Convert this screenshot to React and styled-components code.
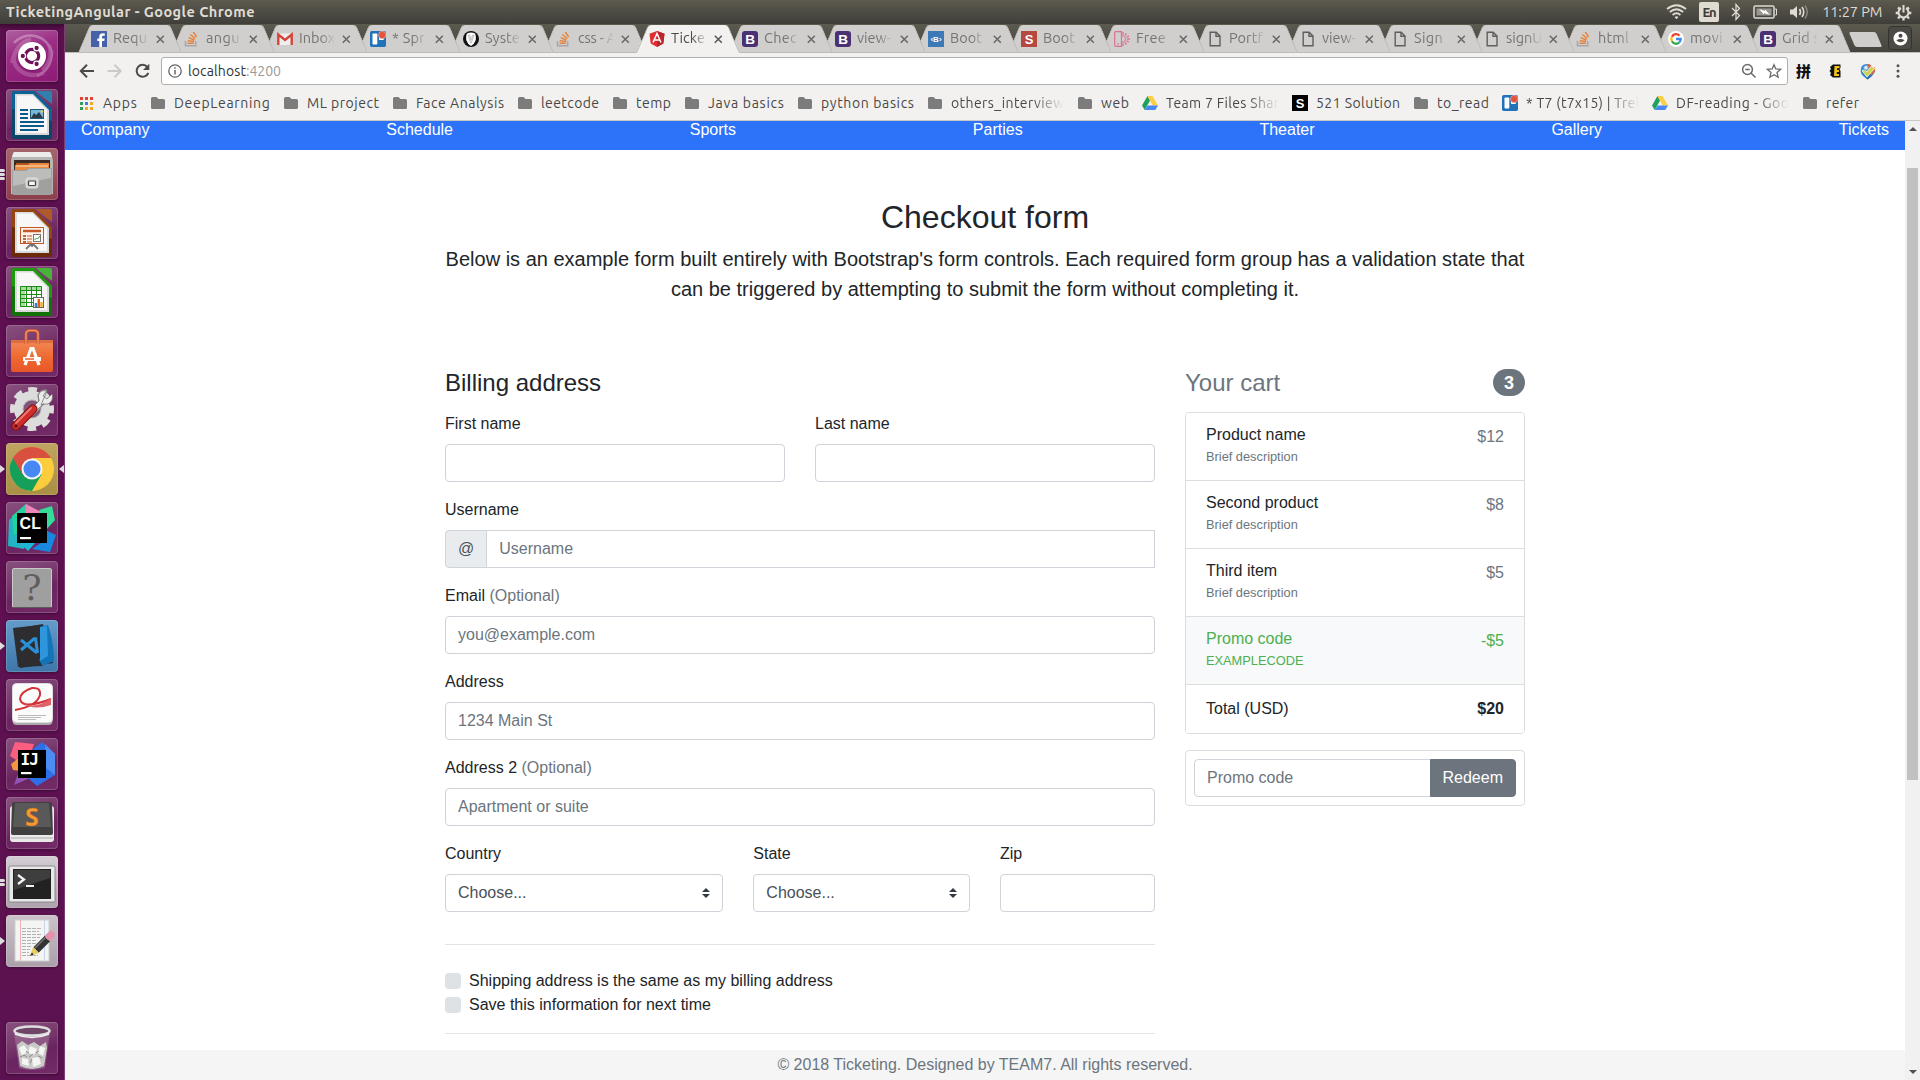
import React, { useLayoutEffect, useRef, useState } from "react";
import styled, { createGlobalStyle, css } from "styled-components";

const uiFont = `Ubuntu, "Open Sans", "Noto Sans", sans-serif`;

const Global = createGlobalStyle`
  *, *::before, *::after { box-sizing: border-box; }
  body { margin: 0; overflow: hidden; font-family: "Liberation Sans", Arial, sans-serif; font-size: 16px; line-height: 1.5; color: #212529; background: #fff; }
  svg { display: block; flex: none; }
`;

const Desktop = styled.div`
  width: 1920px;
  height: 1080px;
  display: flex;
  flex-direction: column;
  overflow: hidden;
`;

/* ---------- text fitted to a known width ---------- */
const FitSpan = styled.span`
  display: inline-block;
  white-space: pre;
`;

function Fit({ width, children }) {
  const ref = useRef(null);
  const [spacing, setSpacing] = useState(0);
  useLayoutEffect(() => {
    const natural = ref.current.getBoundingClientRect().width;
    setSpacing((width - natural) / children.length);
  }, []);
  return (
    <FitSpan ref={ref} style={{ letterSpacing: `${spacing}px` }}>
      {children}
    </FitSpan>
  );
}

/* ---------- system bar ---------- */
const TopBar = styled.header`
  height: 24px;
  flex: none;
  display: flex;
  align-items: center;
  justify-content: space-between;
  padding: 0 8px 0 6px;
  background: linear-gradient(#5d5a4f 0, #57554c 15%, #3f3e39 100%);
  color: #dfdbd2;
  font: 14.5px/24px ${uiFont};
`;
const WindowTitle = styled.div`
  font-weight: 700;
  font-size: 14.5px;
`;
const Indicators = styled.div`
  display: flex;
  align-items: center;
  gap: 11.8px;
`;
const Clock = styled.span`
  margin-right: 1px;
`;
const Keyboard = styled.span`
  width: 20px;
  height: 20px;
  border-radius: 2px;
  background: #dfdbd2;
  color: #3c3b37;
  font-size: 13px;
  font-weight: 600;
  line-height: 21px;
  text-align: center;
`;

/* ---------- launcher ---------- */
const Body = styled.div`
  flex: 1;
  display: flex;
  min-height: 0;
`;
const Launcher = styled.nav`
  width: 65px;
  flex: none;
  display: flex;
  flex-direction: column;
  gap: 7px;
  padding: 6px 6px 6px;
  background: linear-gradient(#3c0a34 0, #5c0f4e 6px, #5f1051 50%, #5c1250 100%);
  border-right: 1px solid #7c3f73;
`;
const Tile = styled.div`
  position: relative;
  width: 52px;
  height: 52px;
  flex: none;
  border-radius: 4px;
  background: ${(p) => p.$bg || "linear-gradient(160deg, #88517f 0, #7a3a6e 35%, #6a2460 60%, #742c68 100%)"};
  box-shadow: inset 0 0 0 1px rgba(255, 255, 255, 0.17), 0 1px 3px rgba(0, 0, 0, 0.35);
  margin-top: ${(p) => (p.$last ? "auto" : "0")};
`;
const Pip = styled.i`
  position: absolute;
  top: 22px;
  ${(p) => (p.$right ? "right: -6px; border-right: 5px solid #ddd;" : "left: -6px; border-left: 5px solid #ddd;")}
  border-top: 4px solid transparent;
  border-bottom: 4px solid transparent;
`;
const Pips = styled.div`
  position: absolute;
  left: -6px;
  top: 0;
  height: 52px;
  display: flex;
  flex-direction: column;
  justify-content: center;
  gap: 1px;
  i {
    width: 5px;
    height: 3px;
    background: #ddd;
    border-radius: 0 2px 2px 0;
  }
`;

function Doc({ dark, mid, light, children }) {
  return (
    <svg width="52" height="52" viewBox="0 0 52 52">
      <path d="M8 2H28L46 20V48Q46 50 44 50H8Q6 50 6 48V4Q6 2 8 2Z" fill={dark} />
      <path d="M8 2H28L46 20V32L6 20V4Q6 2 8 2Z" fill={mid} opacity=".75" />
      <path d="M9 5H27L43 21V46H9Z" fill="#d9d9d9" />
      <path d="M11 6.500H26.500L41 21V44H11Z" fill="#f7f7f7" />
      <path d="M30 2H44Q46 2 46 4V15Q42 12 38 9Z" fill={light} opacity=".9" />
      {children}
    </svg>
  );
}

const UbuntuIcon = () => (
  <svg width="52" height="52" viewBox="0 0 52 52">
    <g fill="none" stroke="#fff" opacity=".3" strokeWidth="2.500">
      <path d="M8 13A22 22 0 0 1 46 23Q45 40 31 46" />
      <path d="M6 33Q9 14 25 9M43 15Q48 31 36 40M11 20Q3 33 16 42Q26 48 38 43" strokeWidth="4" opacity=".6" />
    </g>
    <circle cx="26" cy="27" r="14.500" fill="#4b0a3e" opacity=".35" />
    <circle cx="26" cy="26" r="14" fill="#fff" />
    <circle cx="26" cy="26" r="6.700" fill="none" stroke="#6c1459" strokeWidth="3.200" />
    <g stroke="#fff" strokeWidth="1.300" fill="#6c1459">
      <circle cx="16.800" cy="26" r="2.800" />
      <circle cx="30.600" cy="18" r="2.800" />
      <circle cx="30.600" cy="34" r="2.800" />
    </g>
  </svg>
);
const WriterIcon = () => (
  <Doc dark="#0b466b" mid="#0f6ea3" light="#2a86b5">
    <path d="M14 21h8M14 25h8M14 29h8M14 33h24M14 37h24M14 41h18" stroke="#0a5a8c" strokeWidth="2" />
    <rect x="24.500" y="20.500" width="13" height="9" fill="#76b7dc" stroke="#1c5a7e" />
    <path d="M25 29l3-5 2 2 3-3 4 6z" fill="#2b3a42" />
    <circle cx="36" cy="22.500" r="1.300" fill="#f5c94a" />
  </Doc>
);
const FilesIcon = () => (
  <svg width="52" height="52" viewBox="0 0 52 52">
    <path d="M7 5Q7 4 9 4H43Q45 4 45 5L47 12V46H5V12Z" fill="#b7b7b5" />
    <path d="M8 4H44L46 9H6Z" fill="#ececea" />
    <rect x="8" y="12" width="36" height="10" fill="#3b2b26" />
    <path d="M10 15H42V22H10Z" fill="#b5541c" />
    <path d="M9 17H22L24 15H43V22H9Z" fill="#e8893e" />
    <path d="M10 18H42" stroke="#ffe2bd" />
    <path d="M6 22H20L23 20H46V45Q46 47 44 47H8Q6 47 6 45Z" fill="#a0a09e" />
    <path d="M7 23H20L23 21H45V30L7 38Z" fill="#bcbcba" />
    <rect x="20" y="30" width="12" height="10" rx="2" fill="#cfcfcd" stroke="#e2e2e0" />
    <rect x="22.500" y="33" width="7" height="4.500" rx=".8" fill="#f7f7f7" stroke="#444" strokeWidth="1.200" />
  </svg>
);
const ImpressIcon = () => (
  <Doc dark="#6b2a08" mid="#a34d17" light="#b55d24">
    <rect x="14.500" y="20.500" width="23" height="16" fill="#fff3ec" stroke="#c4572a" />
    <path d="M17 24h18" stroke="#c4572a" strokeWidth="2.500" />
    <path d="M17 29h3M17 32h3M17 35h3" stroke="#9a3c12" strokeWidth="1.500" />
    <path d="M21 29h5M21 32h5M21 35h5" stroke="#d88a68" strokeWidth="1.500" />
    <rect x="27.500" y="27.500" width="7" height="7" fill="#fff" stroke="#777" />
    <path d="M28.500 33l2-2 1 1 2.500-3" stroke="#2b9a38" fill="none" />
    <path d="M25 37l-5 5M27 37l5 5M26 37v3" stroke="#777" strokeWidth="1.800" />
  </Doc>
);
const CalcIcon = () => (
  <Doc dark="#12720a" mid="#23a812" light="#42bf34">
    <rect x="14" y="20" width="22" height="21" fill="#fff" />
    <path d="M14 20h22v5H14zM14 20h5v21H14z" fill="#a9dca0" />
    <path d="M14.500 20.500h21v20h-21zM14 24.500h22M14 28.500h22M14 32.500h22M14 36.500h22M20.500 20v21M25.500 20v21M30.500 20v21" stroke="#1e8a18" fill="none" />
    <rect x="27.500" y="31.500" width="10" height="10" fill="#fff" stroke="#666" />
    <path d="M30 41v-4" stroke="#2d7fd6" strokeWidth="2.500" />
    <path d="M32.800 41v-8" stroke="#e55a1c" strokeWidth="2.500" />
    <path d="M35.500 41v-5" stroke="#efb52d" strokeWidth="2.500" />
  </Doc>
);
const SoftwareIcon = () => (
  <svg width="52" height="52" viewBox="0 0 52 52">
    <defs>
      <linearGradient id="bag" x2="0" y2="1">
        <stop stopColor="#f2895a" />
        <stop offset=".5" stopColor="#ee6c31" />
        <stop offset="1" stopColor="#e8572a" />
      </linearGradient>
    </defs>
    <path d="M5 15H47V45Q47 47 45 47H7Q5 47 5 45Z" fill="url(#bag)" />
    <path d="M5 15H47V18H5Z" fill="#c9542a" opacity=".5" />
    <path d="M20 19V9Q20 5.500 24 5.500H28Q32 5.500 32 9V19" fill="none" stroke="#d0562c" strokeWidth="3" />
    <path d="M20 19V9Q20 5.500 24 5.500H28Q32 5.500 32 9V19" fill="none" stroke="#f39b72" strokeWidth="1.200" />
    <path d="M19 40L25 23.500H27L33 40" fill="none" stroke="#fff" strokeWidth="3.200" />
    <path d="M17 34H35" stroke="#fff" strokeWidth="4" />
    <path d="M19 34H28" stroke="#ee6c31" strokeWidth="1.600" />
  </svg>
);
const SettingsIcon = () => (
  <svg width="52" height="52" viewBox="0 0 52 52">
    <circle cx="26" cy="25" r="13.500" fill="none" stroke="#dcdcdc" strokeWidth="9" />
    <circle cx="26" cy="25" r="19" fill="none" stroke="#dcdcdc" strokeWidth="6" strokeDasharray="8.500 6.420" strokeDashoffset="4.250" />
    <circle cx="26" cy="25" r="9" fill="#83557b" stroke="#b5b5b5" />
    <path d="M35 21L41 7Q34 5 32 12L33 17L22 28L26 31L37 20L42 20Q48 17 46 10L41 15L37 12L41 6Q34 5 32 11L33 17L22 28L27 32L38 20Z" fill="#ececec" stroke="#777" strokeWidth=".8" />
    <path d="M10 42L27 25" stroke="#791010" strokeWidth="9" strokeLinecap="round" />
    <path d="M10 42L27 25" stroke="#cf2d2a" strokeWidth="7" strokeLinecap="round" />
    <path d="M10 39L25 24" stroke="#ef7975" strokeWidth="1.800" strokeLinecap="round" />
    <circle cx="10" cy="42" r="1.600" fill="#5c1010" />
  </svg>
);
const ChromeIcon = () => (
  <svg width="52" height="52" viewBox="0 0 52 52">
    <circle cx="26" cy="26" r="22" fill="#fbcd3c" />
    <path d="M26 26L6.900 15A22 22 0 0 0 26 48L35.500 31.500Z" fill="#149f5b" />
    <path d="M26 15H45A22 22 0 0 0 6.900 15L16.500 31.500Z" fill="#d95040" />
    <circle cx="26" cy="26" r="10.500" fill="#f4f4f4" />
    <circle cx="26" cy="26" r="8.500" fill="#4688f4" />
  </svg>
);
const ClionIcon = () => (
  <svg width="52" height="52" viewBox="0 0 52 52">
    <path d="M3 18L20 2L30 12L18 47L2 44Z" fill="#22b4c2" />
    <path d="M6 14L20 2L24 14L8 34Z" fill="#24d2a0" />
    <path d="M20 2L35 10L30 16L19 14Z" fill="#ee86bd" />
    <path d="M33 8L46 4L49 18L40 28Z" fill="#35dc98" />
    <path d="M37 27L50 33L44 50L26 47L36 40Z" fill="#1788e0" />
    <path d="M12 39L32 38L22 49Z" fill="#1eb7d8" />
    <rect x="11" y="11" width="30" height="30" fill="#000" />
    <text x="13.500" y="26.500" fontSize="16" letterSpacing="0.300" fontFamily='"Liberation Sans", Arial, sans-serif' fontWeight="700" fill="#fff">CL</text>
    <rect x="14" y="35" width="11" height="2.200" fill="#fff" />
  </svg>
);
const UnknownIcon = () => (
  <svg width="52" height="52" viewBox="0 0 52 52">
    <rect x="6.500" y="7.500" width="39" height="39" rx="1.500" fill="#a09f9f" stroke="#c9c9c9" />
    <path d="M7 46.500H46" stroke="#5b5b5b" />
    <text x="26" y="38.500" fontSize="36" textAnchor="middle" fontFamily='"DejaVu Serif", serif' fill="#5f5e5e">?</text>
  </svg>
);
const CodeIcon = () => (
  <svg width="52" height="52" viewBox="0 0 52 52">
    <path d="M9 9L37 4L47 43L14 48Z" fill="#1d1d1f" opacity=".85" />
    <path d="M7 8L34 5L37 46L12 47Z" fill="#2d2d2f" />
    <path d="M34 7L42 5Q48 23 48 41L36 46L33 39L40 37Z" fill="#1474b8" />
    <path d="M34 7L41 6L42 36L34 41Z" fill="#2e96dc" />
    <path d="M15 20L31 33M15 30L29 18M29.500 17.500L31.500 33" stroke="#2b90d8" strokeWidth="3" fill="none" />
  </svg>
);
const PdfIcon = () => (
  <svg width="52" height="52" viewBox="0 0 52 52">
    <rect x="6.500" y="5" width="40" height="41" rx="4" fill="#aaa" />
    <rect x="6.500" y="4.500" width="40" height="39" rx="4" fill="#fbfbfb" stroke="#ddd" />
    <path d="M9 31Q31 27 34 16Q35 8 26 9Q14 13 14 20Q16 31 45 20" fill="none" stroke="#d43239" strokeWidth="2" />
    <path d="M17 24Q29 31 45 19V26Q27 32 17 24Z" fill="#dd626a" />
    <path d="M12 36.500h28M12 38.500h23M12 40.500h18" stroke="#bbb" />
  </svg>
);
const IdeaIcon = () => (
  <svg width="52" height="52" viewBox="0 0 52 52">
    <path d="M9 4L28 6L24 18L10 22L4 18Z" fill="#fb5e7f" />
    <path d="M5 26L14 19L15 33L7 32Z" fill="#f5953c" />
    <path d="M8 47L14 30L24 40Z" fill="#8f55b5" />
    <path d="M26 12L36 4L49 16V37L31 48L22 40Z" fill="#2d6fe8" />
    <path d="M39 6L49 16V37L40 30Z" fill="#4c8bf4" />
    <rect x="12" y="12" width="28" height="28" fill="#000" />
    <text x="14.500" y="27" fontSize="16" fontFamily='"DejaVu Sans Mono", monospace' fontWeight="700" fill="#fff" letterSpacing="-1">IJ</text>
    <rect x="15" y="34" width="10.500" height="2.200" fill="#fff" />
  </svg>
);
const SublimeIcon = () => (
  <svg width="52" height="52" viewBox="0 0 52 52">
    <rect x="4" y="9" width="44" height="36" rx="3" fill="#e9e9e9" />
    <path d="M5 41H47" stroke="#aaa" />
    <path d="M8 5H44Q46 5 46 7L47 36Q47 38 45 38H7Q5 38 5 36L6 7Q6 5 8 5Z" fill="#404040" />
    <path d="M9 6H43L45 30H7Z" fill="#595959" />
    <text x="26" y="29" fontSize="25" textAnchor="middle" fontFamily='"Open Sans", sans-serif' fontWeight="700" fill="#f79a31" stroke="#b9611a" strokeWidth=".4">S</text>
  </svg>
);
const TerminalIcon = () => (
  <svg width="52" height="52" viewBox="0 0 52 52">
    <rect x="3" y="10" width="46" height="36" rx="1.500" fill="#e8e8e8" stroke="#777" strokeWidth=".8" />
    <rect x="7" y="13" width="38" height="30" fill="#222" />
    <path d="M8 14H44V22L8 34Z" fill="#4a4a4a" opacity=".7" />
    <path d="M12 19L18 23.500L12 28" fill="none" stroke="#f2f2f2" strokeWidth="2.300" />
    <path d="M20 30H28" stroke="#f2f2f2" strokeWidth="2" />
  </svg>
);
const EditorIcon = () => (
  <svg width="52" height="52" viewBox="0 0 52 52">
    <rect x="9" y="5" width="34" height="41" fill="#f4f4f2" stroke="#cfcfcf" />
    <path d="M14.500 5V46" stroke="#f1b1b8" />
    <path d="M38.500 5V46" stroke="#c3d6ee" />
    <path d="M16 13.500h19M16 16.500h17M16 19.500h20M16 22.500h18M16 25.500h15M16 28.500h17M16 31.500h10M16 34.500h8M16 37.500h7M16 40.500h16" stroke="#b3b3b3" strokeDasharray="4 1" />
    <path d="M30 35L43 22" stroke="#333" strokeWidth="7.500" />
    <path d="M29 33L41 21" stroke="#777" strokeWidth="1.500" />
    <path d="M41.500 23.500L45 20" stroke="#dadada" strokeWidth="7.500" />
    <path d="M43.500 21.500L45 20" stroke="#e492ab" strokeWidth="7.500" strokeLinecap="round" />
    <path d="M27 32L33 38L24 41Z" fill="#e8cf62" />
    <path d="M24 41L26 37.500L27.500 39.500Z" fill="#222" />
  </svg>
);
const TrashIcon = () => (
  <svg width="52" height="52" viewBox="0 0 52 52">
    <path d="M8 10L13 46Q26 50 39 46L44 10Z" fill="#cbb9c8" opacity=".3" />
    <path d="M11 23L16 19L22 23L28 20L34 24L40 20L41 26L38 44Q26 50 14 44Z" fill="#c9c9c7" />
    <path d="M13 26l5-3 4 6-6 5zM24 24l7 3-3 6-6-2zM34 24l5 2-2 8-5-3zM16 36l6 1 1 7-7-2zM26 36l7-1 2 7-8 3z" fill="#f5f5f3" />
    <path d="M14 35l4-2 3 2M23 35l4-3M32 34l4 2M24 41l2-4M20 29l3 2M30 31l3-2" stroke="#8a8a88" fill="none" />
    <ellipse cx="26" cy="9" rx="17.500" ry="4.500" fill="#6e4569" stroke="#dedede" strokeWidth="2.500" />
    <path d="M9 12Q26 19 43 12" fill="none" stroke="#eee" strokeWidth="1.500" />
  </svg>
);

const apps = [
  { Icon: UbuntuIcon, bg: "linear-gradient(160deg, #b061a0 0, #9b2d85 40%, #8d1b76 100%)" },
  { Icon: WriterIcon },
  { Icon: FilesIcon, bg: "linear-gradient(#a5666d, #8d3d4c)", pips: 3 },
  { Icon: ImpressIcon },
  { Icon: CalcIcon },
  { Icon: SoftwareIcon },
  { Icon: SettingsIcon },
  { Icon: ChromeIcon, bg: "linear-gradient(#bfa561, #a98f43)", pips: 1, focused: true },
  { Icon: ClionIcon },
  { Icon: UnknownIcon },
  { Icon: CodeIcon, bg: "linear-gradient(#639bc9, #3f76aa)", pips: 1 },
  { Icon: PdfIcon },
  { Icon: IdeaIcon },
  { Icon: SublimeIcon },
  { Icon: TerminalIcon, bg: "linear-gradient(#d5cdd4, #ada2ad)", pips: 2 },
  { Icon: EditorIcon, bg: "linear-gradient(#cbc2ca, #aba0aa)", pips: 1 },
  { Icon: TrashIcon, last: true },
];

/* ---------- browser chrome ---------- */
const Window = styled.section`
  flex: 1;
  min-width: 0;
  display: flex;
  flex-direction: column;
`;
const TabStrip = styled.div`
  position: relative;
  height: 29px;
  flex: none;
  display: flex;
  padding: 1px 0 0 13px;
  background: linear-gradient(#5c594f, #45443e);
  border-bottom: 1px solid #bdbcba;
`;
const slant = css`
  content: "";
  position: absolute;
  z-index: -1;
  top: 0;
  bottom: 0;
  background: ${(p) => (p.$active ? "#f2f1f0" : "#d0cfcd")};
`;
const Tab = styled.div`
  position: relative;
  isolation: isolate;
  z-index: ${(p) => p.$z};
  flex: none;
  width: 104px;
  height: ${(p) => (p.$active ? 28 : 27)}px;
  margin-right: ${(p) => (p.$tight ? -12 : -11)}px;
  padding: ${(p) => (p.$active ? 0 : 1)}px 17px 0 13px;
  display: flex;
  align-items: center;
  gap: 6px;
  color: ${(p) => (p.$active ? "#4b4b4b" : "#757473")};
  font: 14.5px/24px ${uiFont};
  &::before {
    ${slant}
    left: 6px;
    right: 40px;
    transform: skewX(-23deg);
    border-top-left-radius: 3px;
    border-left: 1px solid #b5b4b2;
  }
  &::after {
    ${slant}
    left: 40px;
    right: 6px;
    transform: skewX(23deg);
    border-top-right-radius: 3px;
    border-right: 1px solid #b5b4b2;
  }
`;
const TabTitle = styled.span`
  flex: none;
  width: 35px;
  margin-right: 2px;
  padding-bottom: 2px;
  white-space: pre;
  mask-image: linear-gradient(90deg, #000 60%, transparent 105%);
`;
const NewTab = styled.div`
  width: 27px;
  height: 15px;
  margin: 7px 0 0 13px;
  background: #cfcecc;
  border-radius: 2px;
  transform: skewX(23deg);
`;
const Profile = styled.div`
  width: 24px;
  height: 24px;
  margin: 1px 0 0 9px;
  border: 1px solid #34332f;
  border-radius: 4px;
  display: grid;
  place-items: center;
  background: #4b4a44;
`;
const Toolbar = styled.div`
  height: 34px;
  flex: none;
  display: flex;
  align-items: center;
  padding: 2px 0 0 13px;
  background: #f2f1f0;
`;
const NavButtons = styled.div`
  width: 83px;
  display: flex;
  gap: 11px;
`;
const Omnibox = styled.div`
  width: 1627px;
  height: 28px;
  display: flex;
  align-items: center;
  gap: 6px;
  padding: 0 5px 0 6px;
  border: 1px solid #b0afae;
  border-radius: 3px;
  background: #fff;
  font: 14px/26px ${uiFont};
  color: #333;
`;
const Url = styled.span`
  flex: 1;
  display: flex;
  em {
    font-style: normal;
    color: #999;
  }
`;
const BoxIcons = styled.div`
  display: flex;
  gap: 9px;
`;
const Extensions = styled.div`
  flex: 1;
  display: flex;
  align-items: center;
  padding: 0 16px 0 8px;
  justify-content: space-between;
`;
const PinExt = styled.span`
  font: 900 15px/20px "Noto Sans CJK SC", sans-serif;
  color: #111;
`;
const Bookmarks = styled.div`
  height: 34px;
  flex: none;
  display: flex;
  align-items: center;
  gap: 13px;
  padding: 0 0 2px 14px;
  background: #f2f1f0;
  border-bottom: 1px solid #c9c8c7;
  font: 14px/30px ${uiFont};
  color: #484848;
`;
const Bookmark = styled.div`
  display: flex;
  align-items: center;
  gap: 8px;
  flex: none;
`;
const BookmarkLabel = styled.span`
  width: ${(p) => p.$w}px;
  display: block;
  white-space: pre;
  ${(p) => p.$fade && "mask-image: linear-gradient(90deg, #000 72%, transparent 100%);"}
`;

const Folder = () => (
  <svg width="16" height="16" viewBox="0 0 16 16">
    <path d="M1 3.500Q1 2 2.500 2H6.500L8.500 4H13.500Q15 4 15 5.500V12.500Q15 14 13.500 14H2.500Q1 14 1 12.500Z" fill="#7c7c7c" />
  </svg>
);
const AppsGrid = () => (
  <svg width="16" height="16" viewBox="0 0 16 16">
    {["#e34133", "#e34133", "#e34133", "#2f9e58", "#3b7de9", "#f2a91e", "#2f9e58", "#f2a91e", "#f2a91e"].map((c, i) => (
      <rect key={i} x={1 + (i % 3) * 5} y={2 + Math.floor(i / 3) * 5} width="3" height="3" fill={c} />
    ))}
  </svg>
);
const Drive = () => (
  <svg width="16" height="16" viewBox="0 0 16 16">
    <path d="M5.500 1L0 10.500L2.700 15L8 5.500Z" fill="#1fa15d" />
    <path d="M5.500 1H10.500L16 10.500H10.700Z" fill="#fdce44" />
    <path d="M5.500 10.500H16L13.300 15H2.700Z" fill="#4688f4" />
  </svg>
);
const Trello = () => (
  <svg width="16" height="16" viewBox="0 0 16 16">
    <rect y="0" width="16" height="16" rx="1.800" fill="#2272b9" />
    <rect x="2.500" y="2.500" width="4.800" height="11" rx=".7" fill="#fff" />
    <rect x="9" y="2.500" width="4.800" height="6.500" rx=".7" fill="#fff" />
    <circle cx="12.200" cy="4" r="3.700" fill="#e5533d" stroke="#f2d0ca" strokeWidth=".5" />
  </svg>
);
function Letter({ bg, ch, size = 13, r = 0 }) {
  return (
    <svg width="16" height="16" viewBox="0 0 16 16">
      <rect width="16" height="16" rx={r} fill={bg} />
      <text x="8" y={8 + size * 0.36} fontSize={size} fontWeight="700" textAnchor="middle" fontFamily='"Liberation Sans", sans-serif' fill="#fff">
        {ch}
      </text>
    </svg>
  );
}
const Boot = () => <Letter bg="#4b3174" ch="B" r={3} size={13.5} />;
const Facebook = () => (
  <svg width="16" height="16" viewBox="0 0 16 16">
    <rect width="16" height="16" rx=".5" fill="#4761a8" />
    <path d="M11 16V10H13.300L13.700 7.400H11V6Q11 4.800 12.300 4.800H13.800V2.500Q8.300 1.600 8.300 5.600V7.400H6.300V10H8.300V16Z" fill="#fff" />
  </svg>
);
const Stack = () => (
  <svg width="16" height="16" viewBox="0 0 16 16">
    <path d="M1.500 10V14.700H11.700V10" fill="none" stroke="#a9a7a5" strokeWidth="1.500" />
    <path d="M3.500 12.300H9.800M3.700 9.600L10 10.500M4.600 6.600L10.500 9M6.300 3.500L11.300 7.500M9.300 1L12.700 6" stroke="#e8813a" strokeWidth="1.400" />
  </svg>
);
const Gmail = () => (
  <svg width="16" height="16" viewBox="0 0 16 16">
    <rect x="1" y="2.500" width="14" height="11.500" fill="#eee" />
    <path d="M1.300 14V3.500L8 9L14.700 3.500V14" fill="none" stroke="#d5443a" strokeWidth="2.400" />
  </svg>
);
const Medium = () => (
  <svg width="16" height="16" viewBox="0 0 16 16">
    <circle cx="8" cy="8" r="8" fill="#111" />
    <path d="M4 2.500Q8 .500 12 2.500Q13.500 5 12.800 9Q11.500 13 8 15Q4.500 13 3.200 9Q2.500 5 4 2.500Z" fill="#fff" />
    <path d="M5 4H7L8 9L9.500 4H11.200L8.500 12H7.300Z" fill="#ddd" stroke="#999" strokeWidth=".4" />
  </svg>
);
const Angular = () => (
  <svg width="16" height="16" viewBox="0 0 16 16">
    <path d="M8 0L15.500 2.700L14.300 12.600L8 16L1.700 12.600L.5 2.700Z" fill="#dd2f33" />
    <path d="M8 0L15.500 2.700L14.300 12.600L8 16Z" fill="#b8252c" />
    <path d="M4 11.500L8 2.500L12 11.500M5.500 9H10.500" fill="none" stroke="#fff" strokeWidth="1.500" />
  </svg>
);
const PinkPhone = () => (
  <svg width="16" height="16" viewBox="0 0 16 16" fill="none" stroke="#dd6f92">
    <path d="M7.500 .700H2Q.7 .700 .7 2V14Q.7 15.300 2 15.300H7.500Z" strokeWidth="1.200" />
    <path d="M3 13h2" />
    <path d="M8 4.500A3.500 3.500 0 0 1 8 11.500" />
    <path d="M9 1v2.500M12.500 2.500l-1.500 2M15 5l-2.500 1.200M16 8h-3M15 11l-2.500-1.200M12.500 13.500l-1.500-2M9 15v-2.500" strokeWidth="1.300" />
  </svg>
);
const PageIcon = () => (
  <svg width="16" height="16" viewBox="0 0 16 16">
    <path d="M3.200 1.200H9.200L13 5V14.800H3.200ZM9 1.200V5.200H13" fill="none" stroke="#5f5f5f" strokeWidth="1.400" />
  </svg>
);
const Google = () => (
  <svg width="16" height="16" viewBox="0 0 16 16">
    <circle cx="8" cy="8" r="8" fill="#fff" />
    <g fill="none" strokeWidth="2.300">
      <path d="M11.500 4.600A4.700 4.700 0 0 0 3.900 5.800" stroke="#ea4335" />
      <path d="M3.900 5.800A4.700 4.700 0 0 0 3.900 10.300" stroke="#fbbc05" />
      <path d="M3.900 10.300A4.700 4.700 0 0 0 11.200 11.500" stroke="#34a853" />
      <path d="M11.200 11.500A4.700 4.700 0 0 0 12.700 8H8" stroke="#4285f4" />
    </g>
  </svg>
);
const Close = ({ active }) => (
  <svg width="9" height="9" viewBox="0 0 9 9">
    <path d="M.8 .8L7.800 7.800M7.800 .8L.8 7.800" stroke={active ? "#555" : "#666"} strokeWidth="1.500" />
  </svg>
);

const tabs = [
  [Facebook, "Requ", 34],
  [Stack, "angu", 34],
  [Gmail, "Inbox", 36],
  [Trello, "* Spr", 33],
  [Medium, "Syste", 35],
  [Stack, "css - A", 38],
  [Angular, "Ticke", 34],
  [Boot, "Chec", 33],
  [Boot, "view-", 34],
  [() => <Letter bg="#3b79b7" ch="‹B›" size={8} />, "Boot", 32],
  [() => <Letter bg="#b5483f" ch="S" />, "Boot", 32],
  [PinkPhone, "Free", 30],
  [PageIcon, "Portf", 34],
  [PageIcon, "view-", 34],
  [PageIcon, "Sign", 29],
  [PageIcon, "signU", 36],
  [Stack, "html", 31],
  [Google, "movi", 33],
  [Boot, "Grid s", 38],
];
const bookmarks = [
  [AppsGrid, "Apps", 34],
  [Folder, "DeepLearning", 96],
  [Folder, "ML project", 72],
  [Folder, "Face Analysis", 88],
  [Folder, "leetcode", 58],
  [Folder, "temp", 35],
  [Folder, "Java basics", 76],
  [Folder, "python basics", 93],
  [Folder, "others_interview", 113, true],
  [Folder, "web", 28],
  [Drive, "Team 7 Files Shar", 113, true],
  [() => <Letter bg="#000" ch="S" />, "521 Solution", 84],
  [Folder, "to_read", 52],
  [Trello, "* T7 (t7x15) | Trel", 113, true],
  [Drive, "DF-reading - Goo", 113, true],
  [Folder, "refer", 33],
];

/* ---------- page ---------- */
const Viewport = styled.div`
  flex: 1;
  min-height: 0;
  display: flex;
`;
const Page = styled.div`
  flex: 1;
  display: flex;
  flex-direction: column;
  background: #fff;
`;
const SiteNav = styled.nav`
  height: 29px;
  flex: none;
  display: flex;
  align-items: center;
  justify-content: space-between;
  padding: 0 16px 12px;
  background: #2d73fa;
  color: #fff;
`;
const Container = styled.main`
  flex: 1;
  min-height: 0;
  overflow: hidden;
  width: 1080px;
  margin: 0 auto;
  padding-top: 48px;
`;
const Intro = styled.div`
  text-align: center;
  padding-bottom: 48px;
  h2 {
    margin: 0 0 8px;
    font-size: 32px;
    font-weight: 400;
    line-height: 38px;
  }
  p {
    margin: 0 0 16px;
    font-size: 20px;
    line-height: 30px;
  }
`;
const Columns = styled.div`
  display: grid;
  grid-template-columns: 710px 340px;
  gap: 30px;
  align-items: start;
`;
const Heading = styled.h4`
  margin: 0 0 16px;
  height: 28px;
  font-size: 24px;
  line-height: 27px;
  font-weight: 400;
  display: flex;
  align-items: center;
  justify-content: space-between;
  color: ${(p) => (p.$muted ? "#6c757d" : "inherit")};
`;
const Badge = styled.span`
  margin-top: 1px;
  padding: 4.5px 11px;
  border-radius: 14px;
  background: #6c757d;
  color: #fff;
  font-weight: 700;
  font-size: 18px;
  line-height: 18px;
`;
const FormRow = styled.div`
  display: grid;
  grid-template-columns: ${(p) => p.$cols};
  column-gap: 30px;
`;
const Field = styled.div`
  margin-bottom: 16px;
  label {
    display: block;
    margin-bottom: 8px;
    line-height: 24px;
  }
  label span {
    color: #6c757d;
  }
`;
const Input = styled.input`
  display: block;
  width: 100%;
  min-width: 0;
  height: 38px;
  padding: 6px 12px;
  font: 16px/24px "Liberation Sans", Arial, sans-serif;
  border: 1px solid #ced4da;
  border-radius: ${(p) => p.$radius || "4px"};
  background: #fff;
  outline: 0;
  &::placeholder {
    color: #6c757d;
    opacity: 1;
  }
`;
const Group = styled.div`
  display: flex;
`;
const Prepend = styled.span`
  flex: none;
  height: 38px;
  padding: 6px 12px;
  margin-right: -1px;
  border: 1px solid #ced4da;
  border-radius: 4px 0 0 4px;
  background: #e9ecef;
  color: #495057;
`;
const Select = styled.div`
  height: 38px;
  padding: 0 12px;
  display: flex;
  align-items: center;
  justify-content: space-between;
  border: 1px solid #ced4da;
  border-radius: 4px;
  color: #495057;
`;
const Rule = styled.hr`
  margin: ${(p) => p.$m};
  border: 0;
  border-top: 1px solid #e3e3e3;
`;
const Check = styled.div`
  height: 24px;
  display: flex;
  align-items: center;
  gap: 8px;
  &::before {
    content: "";
    width: 16px;
    height: 16px;
    border-radius: 4px;
    background: #dee2e6;
  }
`;
const CartList = styled.ul`
  list-style: none;
  margin: 0 0 16px;
  padding: 0;
  border: 1px solid #dcdddd;
  border-radius: 4px;
  overflow: hidden;
`;
const CartItem = styled.li`
  display: flex;
  justify-content: space-between;
  height: ${(p) => (p.$total ? 48 : 68)}px;
  padding: 12px 20px;
  border-bottom: ${(p) => (p.$total ? 0 : 1)}px solid #dcdddd;
  background: ${(p) => (p.$promo ? "#f8f9fa" : "#fff")};
  color: ${(p) => (p.$promo ? "#4caf50" : "inherit")};
  h6 {
    margin: 0;
    font-size: 16px;
    font-weight: 400;
    line-height: 19px;
  }
  small {
    display: block;
    font-size: 12.8px;
    line-height: 25px;
    color: ${(p) => (p.$promo ? "inherit" : "#6c757d")};
  }
`;
const Price = styled.span`
  color: ${(p) => (p.$promo ? "inherit" : "#6c757d")};
`;
const PromoCard = styled.div`
  display: flex;
  padding: 8px;
  border: 1px solid #dcdddd;
  border-radius: 4px;
`;
const Redeem = styled.button`
  flex: none;
  height: 38px;
  margin-left: -1px;
  padding: 6px 12px;
  border: 1px solid #6c757d;
  border-radius: 0 4px 4px 0;
  background: #6c757d;
  color: #fff;
  font: 16px/24px "Liberation Sans", Arial, sans-serif;
`;
const Footer = styled.footer`
  height: 30px;
  flex: none;
  background: #f5f5f5;
  color: #6c757d;
  text-align: center;
  line-height: 30px;
`;
const Scrollbar = styled.div`
  width: 15px;
  flex: none;
  display: flex;
  flex-direction: column;
  align-items: center;
  justify-content: space-between;
  padding: 6px 0 6px;
  background: #f1f1f1;
`;
const Thumb = styled.div`
  width: 11px;
  height: 612px;
  margin-bottom: 253px;
  background: #c1c1c1;
`;

const Updown = () => (
  <svg width="8" height="10" viewBox="0 0 8 10">
    <path d="M0 4L4 0L8 4ZM0 6L4 10L8 6Z" fill="#343a40" />
  </svg>
);

function SystemBar() {
  return (
    <TopBar>
      <WindowTitle><Fit width={249}>TicketingAngular - Google Chrome</Fit></WindowTitle>
      <Indicators>
        <svg width="21" height="18" viewBox="0 0 21 18" fill="none" stroke="#dfdbd2" strokeWidth="1.800">
          <path d="M1 6Q10.500 -1.500 20 6M3.800 9Q10.500 3.500 17.200 9M6.600 12Q10.500 8.500 14.400 12" />
          <path d="M8.500 14L10.500 16.300L12.500 14Q10.500 12.500 8.500 14Z" fill="#dfdbd2" stroke="none" />
        </svg>
        <Keyboard><Fit width={13}>En</Fit></Keyboard>
        <svg width="10" height="18" viewBox="0 0 10 18" fill="none" stroke="#dfdbd2" strokeWidth="1.300">
          <path d="M1 5L8.500 12.500L5 16.500V1.500L8.500 5.500L1 13" />
        </svg>
        <svg width="25" height="14" viewBox="0 0 25 14">
          <rect x="1" y="1" width="20" height="12" rx="1.500" fill="none" stroke="#dfdbd2" strokeWidth="1.500" />
          <rect x="3.500" y="3.500" width="15" height="7" fill="#9a978f" />
          <path d="M22 4h1.500v6H22" fill="none" stroke="#dfdbd2" />
          <path d="M6 4L12 6V4.500L17 10L11 8V9.500Z" fill="#fff" />
        </svg>
        <svg width="21" height="16" viewBox="0 0 21 16">
          <path d="M1 5.500H4L8 2V14L4 10.500H1Z" fill="#dfdbd2" />
          <path d="M10.500 5Q12.500 8 10.500 11M13 3Q16.500 8 13 13" fill="none" stroke="#dfdbd2" strokeWidth="1.600" />
          <path d="M16 1.500Q20.500 8 16 14.500" fill="none" stroke="#8b8880" strokeWidth="1.500" />
        </svg>
        <Clock><Fit width={60}>11:27 PM</Fit></Clock>
        <svg width="17" height="17" viewBox="0 0 17 17" fill="none" stroke="#dfdbd2">
          <path d="M6 4.200A5 5 0 1 0 11 4.200" strokeWidth="2" />
          <path d="M8.500 1V8.500" strokeWidth="2" />
          <path d="M3 3.500l1.800 1.500M14 3.500l-1.800 1.500M.7 9H3M14 9h2.300M3 14.500l1.500-1.700M14 14.500l-1.500-1.700M8.500 14v2.500" strokeWidth="2.300" />
        </svg>
      </Indicators>
    </TopBar>
  );
}

function Dock() {
  return (
    <Launcher>
      {apps.map(({ Icon, bg, pips, focused, last }, i) => (
        <Tile key={i} $bg={bg} $last={last}>
          <Icon />
          {pips === 1 && <Pip />}
          {focused && <Pip $right />}
          {pips > 1 && (
            <Pips>{Array.from({ length: pips }, (_, k) => <i key={k} />)}</Pips>
          )}
        </Tile>
      ))}
    </Launcher>
  );
}

function BrowserChrome() {
  return (
    <>
      <TabStrip>
        {tabs.map(([Icon, title, w], i) => {
          const active = i === 6;
          return (
            <Tab key={i} $active={active} $tight={i > 12} $z={active ? 40 : 30 - i}>
              <Icon />
              <TabTitle><Fit width={w}>{title}</Fit></TabTitle>
              <Close active={active} />
            </Tab>
          );
        })}
        <NewTab />
        <Profile>
          <svg width="15" height="15" viewBox="0 0 15 15">
            <circle cx="7.500" cy="7.500" r="7" fill="#fff" />
            <circle cx="7.500" cy="4.800" r="2" fill="#4b4a44" />
            <path d="M3.300 9.200Q7.500 6.800 11.700 9.200Q7.500 13.500 3.300 9.200Z" fill="#4b4a44" />
          </svg>
        </Profile>
      </TabStrip>
      <Toolbar>
        <NavButtons>
          <svg width="17" height="16" viewBox="0 0 17 16" fill="none" stroke="#4a4a4a" strokeWidth="2">
            <path d="M16 8H3M9 1.800L2.800 8L9 14.200" />
          </svg>
          <svg width="17" height="16" viewBox="0 0 17 16" fill="none" stroke="#cbcac9" strokeWidth="2">
            <path d="M1.500 8H14.500M8.500 1.800L14.700 8L8.500 14.200" />
          </svg>
          <svg width="17" height="16" viewBox="0 0 17 16" fill="none" stroke="#4a4a4a" strokeWidth="2">
            <path d="M13.300 4A6 6 0 1 0 14.300 9.800" />
            <path d="M15.300 .800V7H9Z" fill="#4a4a4a" stroke="none" />
          </svg>
        </NavButtons>
        <Omnibox>
          <svg width="14" height="14" viewBox="0 0 14 14">
            <circle cx="7" cy="7" r="6.200" fill="none" stroke="#666" strokeWidth="1.300" />
            <path d="M7 6V10.500M7 3.200V4.800" stroke="#666" strokeWidth="1.500" />
          </svg>
          <Url>
            <Fit width={58}>localhost</Fit>
            <em><Fit width={35}>:4200</Fit></em>
          </Url>
          <BoxIcons>
            <svg width="16" height="16" viewBox="0 0 16 16" fill="none" stroke="#6a6a6a" strokeWidth="1.500">
              <circle cx="6.500" cy="6.500" r="4.900" />
              <path d="M10 10L14.500 14.500M4.300 6.500H8.700" />
            </svg>
            <svg width="16" height="16" viewBox="0 0 16 16" fill="none" stroke="#6a6a6a" strokeWidth="1.300">
              <path d="M8 1.700L9.800 6L14.600 6.400L11 9.500L12.100 14.200L8 11.700L3.900 14.200L5 9.500L1.400 6.400L6.200 6Z" />
            </svg>
          </BoxIcons>
        </Omnibox>
        <Extensions>
          <PinExt>拼</PinExt>
          <svg width="16" height="16" viewBox="0 0 16 16">
            <path d="M6 1.500H13.500V5L12.500 6L13.500 8V14.500H6L3 12L4 10L2.500 8L4 6L3 4Z" fill="#111" />
            <path d="M7.500 3H12.500V5.200H10V7H12V9H9.800V11H12V13H7Z" fill="#efc21c" />
          </svg>
          <svg width="17" height="17" viewBox="0 0 17 17">
            <path d="M2 5Q3 1 8 1Q12 1 13 4L16 5Q17 9 13 13L8.500 16.500L4 13Q1 10 2 5Z" fill="#3d8fd6" />
            <path d="M8 1Q12 1 13 4L16 4.500V8L9 16.500L8 8Z" fill="#e8622c" />
            <path d="M1.500 8L8.500 16.500L13 13L8 8Z" fill="#2c6fb8" />
            <path d="M3 8L8 14L15.500 5.500L12.500 3L7.700 9L6 6.500Z" fill="#c3d84a" stroke="#fff" strokeWidth=".8" />
            <circle cx="7" cy="4.800" r="2.300" fill="#e8eef5" stroke="#5c9fdb" />
          </svg>
          <svg width="12" height="16" viewBox="2 0 12 16" fill="#555">
            <circle cx="8" cy="2.700" r="1.500" />
            <circle cx="8" cy="8" r="1.500" />
            <circle cx="8" cy="13.300" r="1.500" />
          </svg>
        </Extensions>
      </Toolbar>
      <Bookmarks>
        {bookmarks.map(([Icon, label, w, fade], i) => (
          <Bookmark key={i}>
            <Icon />
            <BookmarkLabel $w={w} $fade={fade}><Fit width={w + 0.5}>{label}</Fit></BookmarkLabel>
          </Bookmark>
        ))}
      </Bookmarks>
    </>
  );
}

function BillingForm() {
  return (
    <section>
      <Heading>Billing address</Heading>
      <FormRow $cols="340px 340px">
        <Field><label>First name</label><Input /></Field>
        <Field><label>Last name</label><Input /></Field>
      </FormRow>
      <Field>
        <label>Username</label>
        <Group>
          <Prepend>@</Prepend>
          <Input placeholder="Username" $radius="0" />
        </Group>
      </Field>
      <Field><label>Email <span>(Optional)</span></label><Input placeholder="you@example.com" /></Field>
      <Field><label>Address</label><Input placeholder="1234 Main St" /></Field>
      <Field><label>Address 2 <span>(Optional)</span></label><Input placeholder="Apartment or suite" /></Field>
      <FormRow $cols="278.33px 216.67px 155px">
        <Field><label>Country</label><Select>Choose...<Updown /></Select></Field>
        <Field><label>State</label><Select>Choose...<Updown /></Select></Field>
        <Field><label>Zip</label><Input /></Field>
      </FormRow>
      <Rule $m="16px 0 24px" />
      <Check>Shipping address is the same as my billing address</Check>
      <Check>Save this information for next time</Check>
      <Rule $m="16px 0 0" />
    </section>
  );
}

function Cart() {
  const items = [
    ["Product name", "Brief description", "$12"],
    ["Second product", "Brief description", "$8"],
    ["Third item", "Brief description", "$5"],
    ["Promo code", "EXAMPLECODE", "-$5", true],
  ];
  return (
    <aside>
      <Heading $muted>Your cart<Badge>3</Badge></Heading>
      <CartList>
        {items.map(([name, note, price, promo]) => (
          <CartItem key={name} $promo={promo}>
            <div><h6>{name}</h6><small>{note}</small></div>
            <Price $promo={promo}>{price}</Price>
          </CartItem>
        ))}
        <CartItem $total><span>Total (USD)</span><strong>$20</strong></CartItem>
      </CartList>
      <PromoCard>
        <Input placeholder="Promo code" $radius="4px 0 0 4px" />
        <Redeem>Redeem</Redeem>
      </PromoCard>
    </aside>
  );
}

export default function App() {
  return (
    <Desktop>
      <Global />
      <SystemBar />
      <Body>
        <Dock />
        <Window>
          <BrowserChrome />
          <Viewport>
            <Page>
              <SiteNav>
                {["Company", "Schedule", "Sports", "Parties", "Theater", "Gallery", "Tickets"].map((t) => (
                  <span key={t}>{t}</span>
                ))}
              </SiteNav>
              <Container>
                <Intro>
                  <h2>Checkout form</h2>
                  <p>
                    Below is an example form built entirely with Bootstrap's form controls. Each required form group has a validation state that can be triggered by attempting to submit the form without completing it.
                  </p>
                </Intro>
                <Columns>
                  <BillingForm />
                  <Cart />
                </Columns>
              </Container>
              <Footer>© 2018 Ticketing. Designed by TEAM7. All rights reserved.</Footer>
            </Page>
            <Scrollbar>
              <svg width="8" height="4" viewBox="0 0 8 4"><path d="M0 4L4 0L8 4Z" fill="#505050" /></svg>
              <Thumb />
              <svg width="8" height="4" viewBox="0 0 8 4"><path d="M0 0L4 4L8 0Z" fill="#505050" /></svg>
            </Scrollbar>
          </Viewport>
        </Window>
      </Body>
    </Desktop>
  );
}
